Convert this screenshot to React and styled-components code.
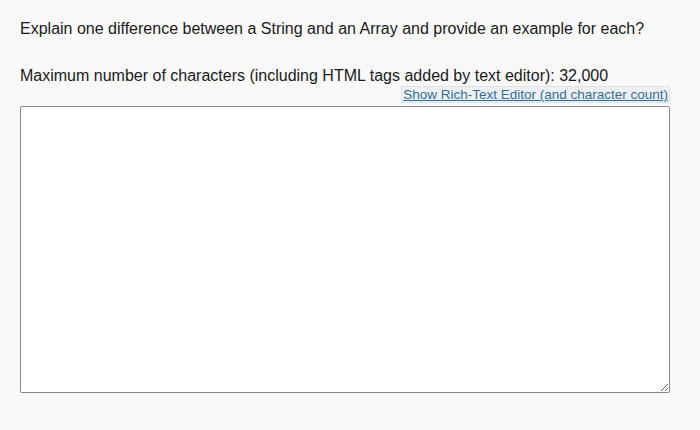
import React from "react";
import styled, { createGlobalStyle } from "styled-components";

const Global = createGlobalStyle`
  html, body { margin: 0; background: #f9f9f9; }
  body { font-family: "Liberation Sans", Arial, sans-serif; color: #1a1a1a; }
`;

const Wrap = styled.div`
  padding: 19px 30px 0 20px;
  display: flex;
  flex-direction: column;
`;

const Question = styled.p`
  margin: 0;
  font-size: 16px;
  line-height: 20px;
`;

const Limit = styled.p`
  margin: 27px 0 0;
  font-size: 16px;
  line-height: 20px;
`;

const LinkRow = styled.div`
  display: flex;
  justify-content: flex-end;
  margin-top: 0px;
`;

const Link = styled.a`
  font-size: 13.5px;
  line-height: 15px;
  color: #2f6f99;
  text-decoration: underline;
  background: #eef1f4;
  border: 1px solid #dfe3e8;
  padding: 0 1px;
  cursor: pointer;
`;

const Area = styled.textarea`
  margin-top: 3px;
  height: 287px;
  box-sizing: border-box;
  width: 100%;
  border: 1px solid #8a8a8a;
  border-radius: 2px;
  background: #fff;
  resize: vertical;
  font-family: inherit;
  box-shadow: 0 1px 1px rgba(0,0,0,0.08);
`;

export default function App() {
  return (
    <>
      <Global />
      <Wrap>
        <Question>Explain one difference between a String and an Array and provide an example for each?</Question>
        <Limit>Maximum number of characters (including HTML tags added by text editor): 32,000</Limit>
        <LinkRow>
          <Link>Show Rich-Text Editor (and character count)</Link>
        </LinkRow>
        <Area />
      </Wrap>
    </>
  );
}
